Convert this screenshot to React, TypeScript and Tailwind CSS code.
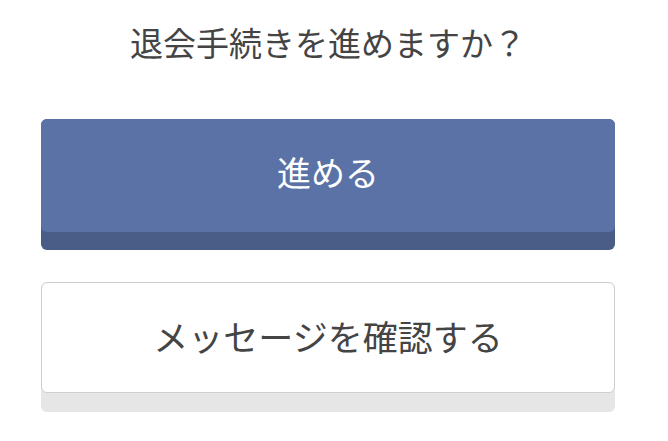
import React from 'react';

const FONT = '"Noto Sans CJK JP", "Noto Sans", sans-serif';

export default function App() {
  return (
    <div className="w-[656px] bg-white px-[41px] pt-[22px]" style={{ fontFamily: FONT }}>
      <p className="text-center text-[33px] leading-[40px] text-[#444]">退会手続きを進めますか？</p>

      <div className="mt-[57px] flex flex-col gap-[32px]">
        <div className="rounded-[6px] bg-[#4a5d87] pb-[18px]">
          <button className="flex h-[113px] w-full items-center justify-center rounded-[6px] bg-[#5a72a5] pb-[8px] text-[34px] text-white">
            進める
          </button>
        </div>

        <div className="rounded-[6px] bg-[#e6e6e6] pb-[19px]">
          <button className="flex h-[111px] w-full items-center justify-center rounded-[6px] border border-[#cfcfcf] bg-white pb-[2px] text-[35px] text-[#444]">
            メッセージを確認する
          </button>
        </div>
      </div>
    </div>
  );
}
